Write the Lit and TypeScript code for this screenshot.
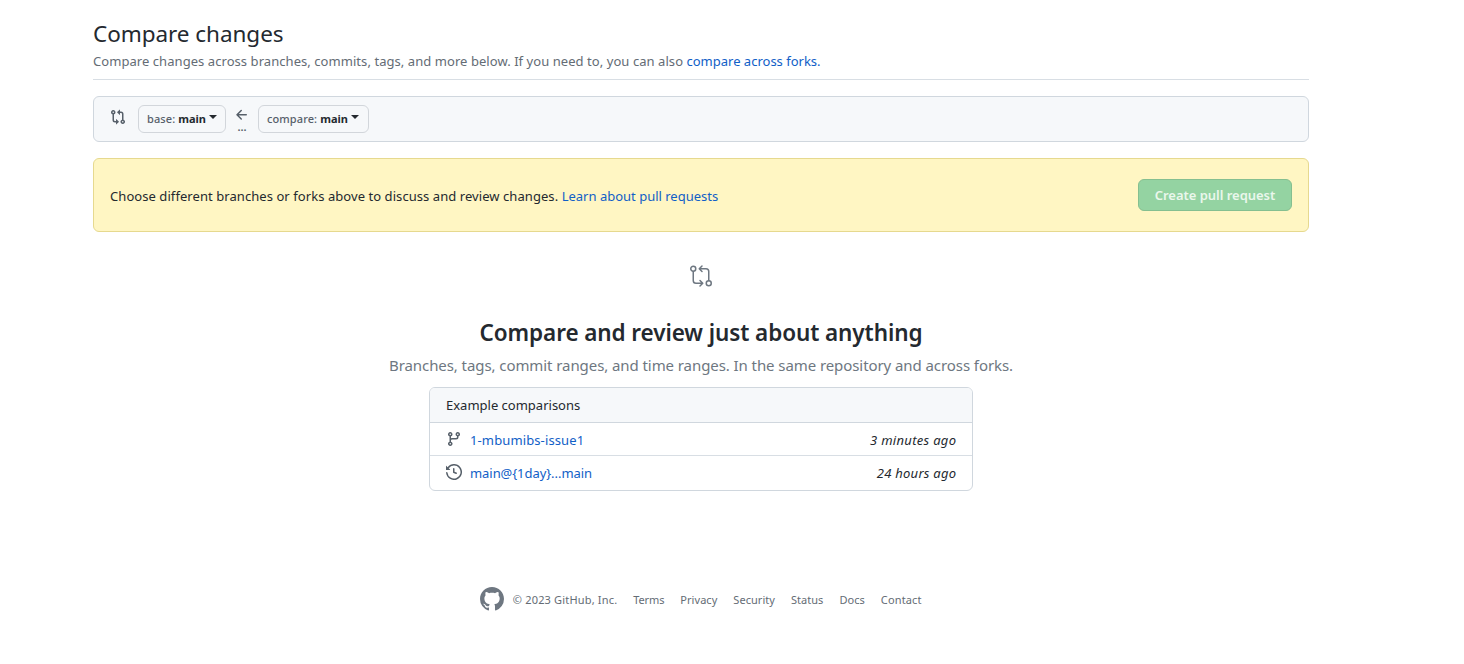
import { LitElement, html, css, svg } from "lit";
import { customElement } from "lit/decorators.js";

const icon = (cls: string, size: number, body: unknown) =>
  html`<svg class=${cls} viewBox="0 0 ${size} ${size}" width=${size} height=${size} aria-hidden="true">${body}</svg>`;

const compare16 = svg`<path d="M9.573.677A.25.25 0 0 1 10 .854V2.5h1A2.5 2.5 0 0 1 13.5 5v5.628a2.251 2.251 0 1 1-1.5 0V5a1 1 0 0 0-1-1h-1v1.646a.25.25 0 0 1-.427.177L7.177 3.427a.25.25 0 0 1 0-.354ZM6 12v-1.646a.25.25 0 0 1 .427-.177l2.396 2.396a.25.25 0 0 1 0 .354l-2.396 2.396A.25.25 0 0 1 6 15.146V13.5H5A2.5 2.5 0 0 1 2.5 11V5.372a2.25 2.25 0 1 1 1.5 0V11a1 1 0 0 0 1 1ZM4 3.25a.75.75 0 1 0-1.5 0 .75.75 0 0 0 1.5 0ZM12.75 12a.75.75 0 1 0 0 1.5.75.75 0 0 0 0-1.5Z"/>`;
const compare24 = svg`<g fill="none" stroke="currentColor" stroke-width="1.5" stroke-linecap="round" stroke-linejoin="round"><circle cx="4.25" cy="4.75" r="2.5"/><circle cx="19.75" cy="19.25" r="2.5"/><path d="M4.25 7.5v9a2.75 2.75 0 0 0 2.75 2.75h6.5M11 16.5l2.75 2.75L11 22M19.75 16.5v-9A2.75 2.75 0 0 0 17 4.75h-6.5M13 2l-2.75 2.75L13 7.5"/></g>`;
const arrowLeft = svg`<path d="M7.78 12.53a.75.75 0 0 1-1.06 0L2.47 8.28a.75.75 0 0 1 0-1.06l4.25-4.25a.751.751 0 0 1 1.042.018.751.751 0 0 1 .018 1.042L4.81 7h7.44a.75.75 0 0 1 0 1.5H4.81l2.97 2.97a.75.75 0 0 1 0 1.06Z"/>`;
const branch = svg`<path d="M9.5 3.25a2.25 2.25 0 1 1 3 2.122V6A2.5 2.5 0 0 1 10 8.5H6a1 1 0 0 0-1 1v1.128a2.251 2.251 0 1 1-1.5 0V5.372a2.25 2.25 0 1 1 1.5 0v1.836A2.493 2.493 0 0 1 6 7h4a1 1 0 0 0 1-1v-.628A2.25 2.25 0 0 1 9.5 3.25Zm-6 0a.75.75 0 1 0 1.5 0 .75.75 0 0 0-1.5 0Zm8.25-.75a.75.75 0 1 0 0 1.5.75.75 0 0 0 0-1.5ZM4.25 12a.75.75 0 1 0 0 1.5.75.75 0 0 0 0-1.5Z"/>`;
const history = svg`<path d="m.427 1.927 1.215 1.215a8.002 8.002 0 1 1-1.6 5.685.75.75 0 1 1 1.493-.154 6.5 6.5 0 1 0 1.18-4.458l1.358 1.358A.25.25 0 0 1 3.896 6H.25A.25.25 0 0 1 0 5.75V2.104a.25.25 0 0 1 .427-.177ZM7.75 4a.75.75 0 0 1 .75.75v2.992l2.028.812a.75.75 0 0 1-.557 1.392l-2.5-1A.751.751 0 0 1 7 8.25v-3.5A.75.75 0 0 1 7.75 4Z"/>`;
const mark = svg`<path transform="scale(1.5)" d="M8 0c4.42 0 8 3.58 8 8a8.013 8.013 0 0 1-5.45 7.59c-.4.08-.55-.17-.55-.38 0-.27.01-1.13.01-2.2 0-.75-.25-1.23-.54-1.48 1.78-.2 3.65-.88 3.65-3.95 0-.88-.31-1.59-.82-2.15.08-.2.36-1.02-.08-2.12 0 0-.67-.22-2.2.82-.64-.18-1.32-.27-2-.27-.68 0-1.36.09-2 .27-1.53-1.03-2.2-.82-2.2-.82-.44 1.1-.16 1.92-.08 2.12-.51.56-.82 1.28-.82 2.15 0 3.06 1.86 3.75 3.64 3.95-.23.2-.44.55-.51 1.07-.46.21-1.61.55-2.33-.66-.15-.24-.6-.83-1.23-.82-.67.01-.27.38.01.53.34.19.73.9.82 1.13.16.45.68 1.31 2.69.94 0 .67.01 1.3.01 1.49 0 .21-.15.45-.55.38A7.995 7.995 0 0 1 0 8c0-4.42 3.58-8 8-8Z"/>`;

@customElement("app-root")
export class AppRoot extends LitElement {
  static styles = css`
    :host {
      display: block;
      min-height: 664px;
      background: #fff;
      color: #24292f;
      font: 13px/20px "Noto Sans", "Open Sans", sans-serif;
      white-space: nowrap;
    }
    * { box-sizing: border-box; }
    svg { display: block; fill: currentColor; flex: none; }
    a { color: #1160c7; text-decoration: none; }
    .page { width: 1216px; margin-left: 93px; padding-top: 16px; }
    .head { height: 64px; border-bottom: 1px solid #d8dee4; }
    h1 { margin: 0; padding: 1px 0; font-size: 22.5px; line-height: 33px; font-weight: 400; letter-spacing: -0.05px; }
    .lead { margin: 0; color: #646c75; letter-spacing: 0.059px; }
    .lead a { letter-spacing: 0; }
    .range {
      display: flex; height: 46px; margin-top: 16px; padding: 8px 16px;
      background: #f6f8fa; border: 1px solid #d0d7de; border-radius: 6px; color: #57606a;
    }
    .range-icon { margin-top: 4px; }
    .select {
      display: flex; align-items: center; height: 28px; padding: 0 8px;
      border: 1px solid #d2d6db; border-radius: 6px;
      font-size: 11px; font-weight: 500; letter-spacing: 0.1px;
    }
    .select b { margin-left: 3px; color: #24292f; font-weight: 700; letter-spacing: 0; }
    .select i { margin: -4px 0 0 3px; border: 4px solid transparent; border-top-color: #24292f; border-bottom: 0; }
    .base { width: 88px; margin-left: 12px; }
    .head-branch { width: 111px; }
    .dir { width: 32px; display: flex; flex-direction: column; align-items: center; padding-top: 2px; }
    .dots { font-size: 11px; line-height: 12px; margin-top: -2px; font-weight: 600; }
    .flash {
      display: flex; align-items: center; justify-content: space-between; height: 74px; margin-top: 16px;
      padding: 2px 16px 0; background: #fff6c3; border: 1px solid #e6d98f; border-radius: 6px; letter-spacing: 0.065px;
    }
    .flash a { letter-spacing: 0; }
    .create {
      width: 154px; height: 32px; border: 1px solid #85bf90; border-radius: 6px; background: #94d3a2;
      color: #eaf7ec; font: 600 13px/20px "Noto Sans", sans-serif; letter-spacing: -0.028px; padding: 0; margin-bottom: 2px;
    }
    .blank { display: flex; flex-direction: column; align-items: center; padding-top: 32px; }
    .blank-icon { color: #6e7781; }
    h2 { margin: 27px 0 0; font-size: 22.5px; line-height: 36px; font-weight: 600; letter-spacing: -0.085px; }
    .sub { margin: 2px 0 0; font-size: 15px; line-height: 24px; color: #6e7781; letter-spacing: -0.077px; }
    .box { width: 544px; height: 104px; margin-top: 10px; border: 1px solid #d0d7de; border-radius: 6px; overflow: hidden; }
    .box-head { height: 35px; padding: 7px 16px; background: #f6f8fa; border-bottom: 1px solid #d0d7de; }
    .row { display: flex; height: 32px; padding: 7px 16px 0; }
    .row + .row { height: 35px; border-top: 1px solid #d8dee4; }
    .row svg { margin-top: 1px; color: #57606a; }
    .row a { margin-left: 8px; }
    .row em { margin-left: auto; letter-spacing: 0.3px; margin-right: -0.3px; }
    .row + .row em { letter-spacing: 0.25px; }
    .s-branch { letter-spacing: 0.12px; }
    .s-time { letter-spacing: -0.058px; }
    footer { display: flex; justify-content: center; align-items: center; margin-top: 96px; height: 24px; font-size: 11px; color: #646c75; }
    footer .mark { color: #6e7781; }
    footer .copy { margin: 2px 16px 0 8.5px; width: 104.5px; letter-spacing: 0.177px; }
    nav { display: flex; gap: 16px; padding-top: 2px; letter-spacing: 0.04px; }
    nav a { color: inherit; }
    nav a:first-child { letter-spacing: -0.129px; }
    nav a:last-child { letter-spacing: 0.15px; }
  `;

  render() {
    return html`
      <div class="page">
        <header class="head">
          <h1>Compare changes</h1>
          <p class="lead">Compare changes across branches, commits, tags, and more below. If you need to, you can also <a>compare across forks.</a></p>
        </header>
        <div class="range">
          ${icon("range-icon", 16, compare16)}
          <div class="select base"><span>base:</span><b>main</b><i></i></div>
          <div class="dir">${icon("", 16, arrowLeft)}<span class="dots">...</span></div>
          <div class="select head-branch"><span>compare:</span><b>main</b><i></i></div>
        </div>
        <div class="flash">
          <span>Choose different branches or forks above to discuss and review changes. <a>Learn about pull requests</a></span>
          <button class="create">Create pull request</button>
        </div>
        <main class="blank">
          ${icon("blank-icon", 24, compare24)}
          <h2>Compare and review just about anything</h2>
          <p class="sub">Branches, tags, commit ranges, and time ranges. In the same repository and across forks.</p>
          <section class="box">
            <div class="box-head">Example comparisons</div>
            <div class="row">${icon("", 16, branch)}<a class="s-branch">1-mbumibs-issue1</a><em>3 minutes ago</em></div>
            <div class="row">${icon("", 16, history)}<a class="s-time">main@{1day}...main</a><em>24 hours ago</em></div>
          </section>
        </main>
        <footer>
          ${icon("mark", 24, mark)}
          <span class="copy">© 2023 GitHub, Inc.</span>
          <nav>${["Terms", "Privacy", "Security", "Status", "Docs", "Contact"].map((t) => html`<a>${t}</a>`)}</nav>
        </footer>
      </div>
    `;
  }
}
